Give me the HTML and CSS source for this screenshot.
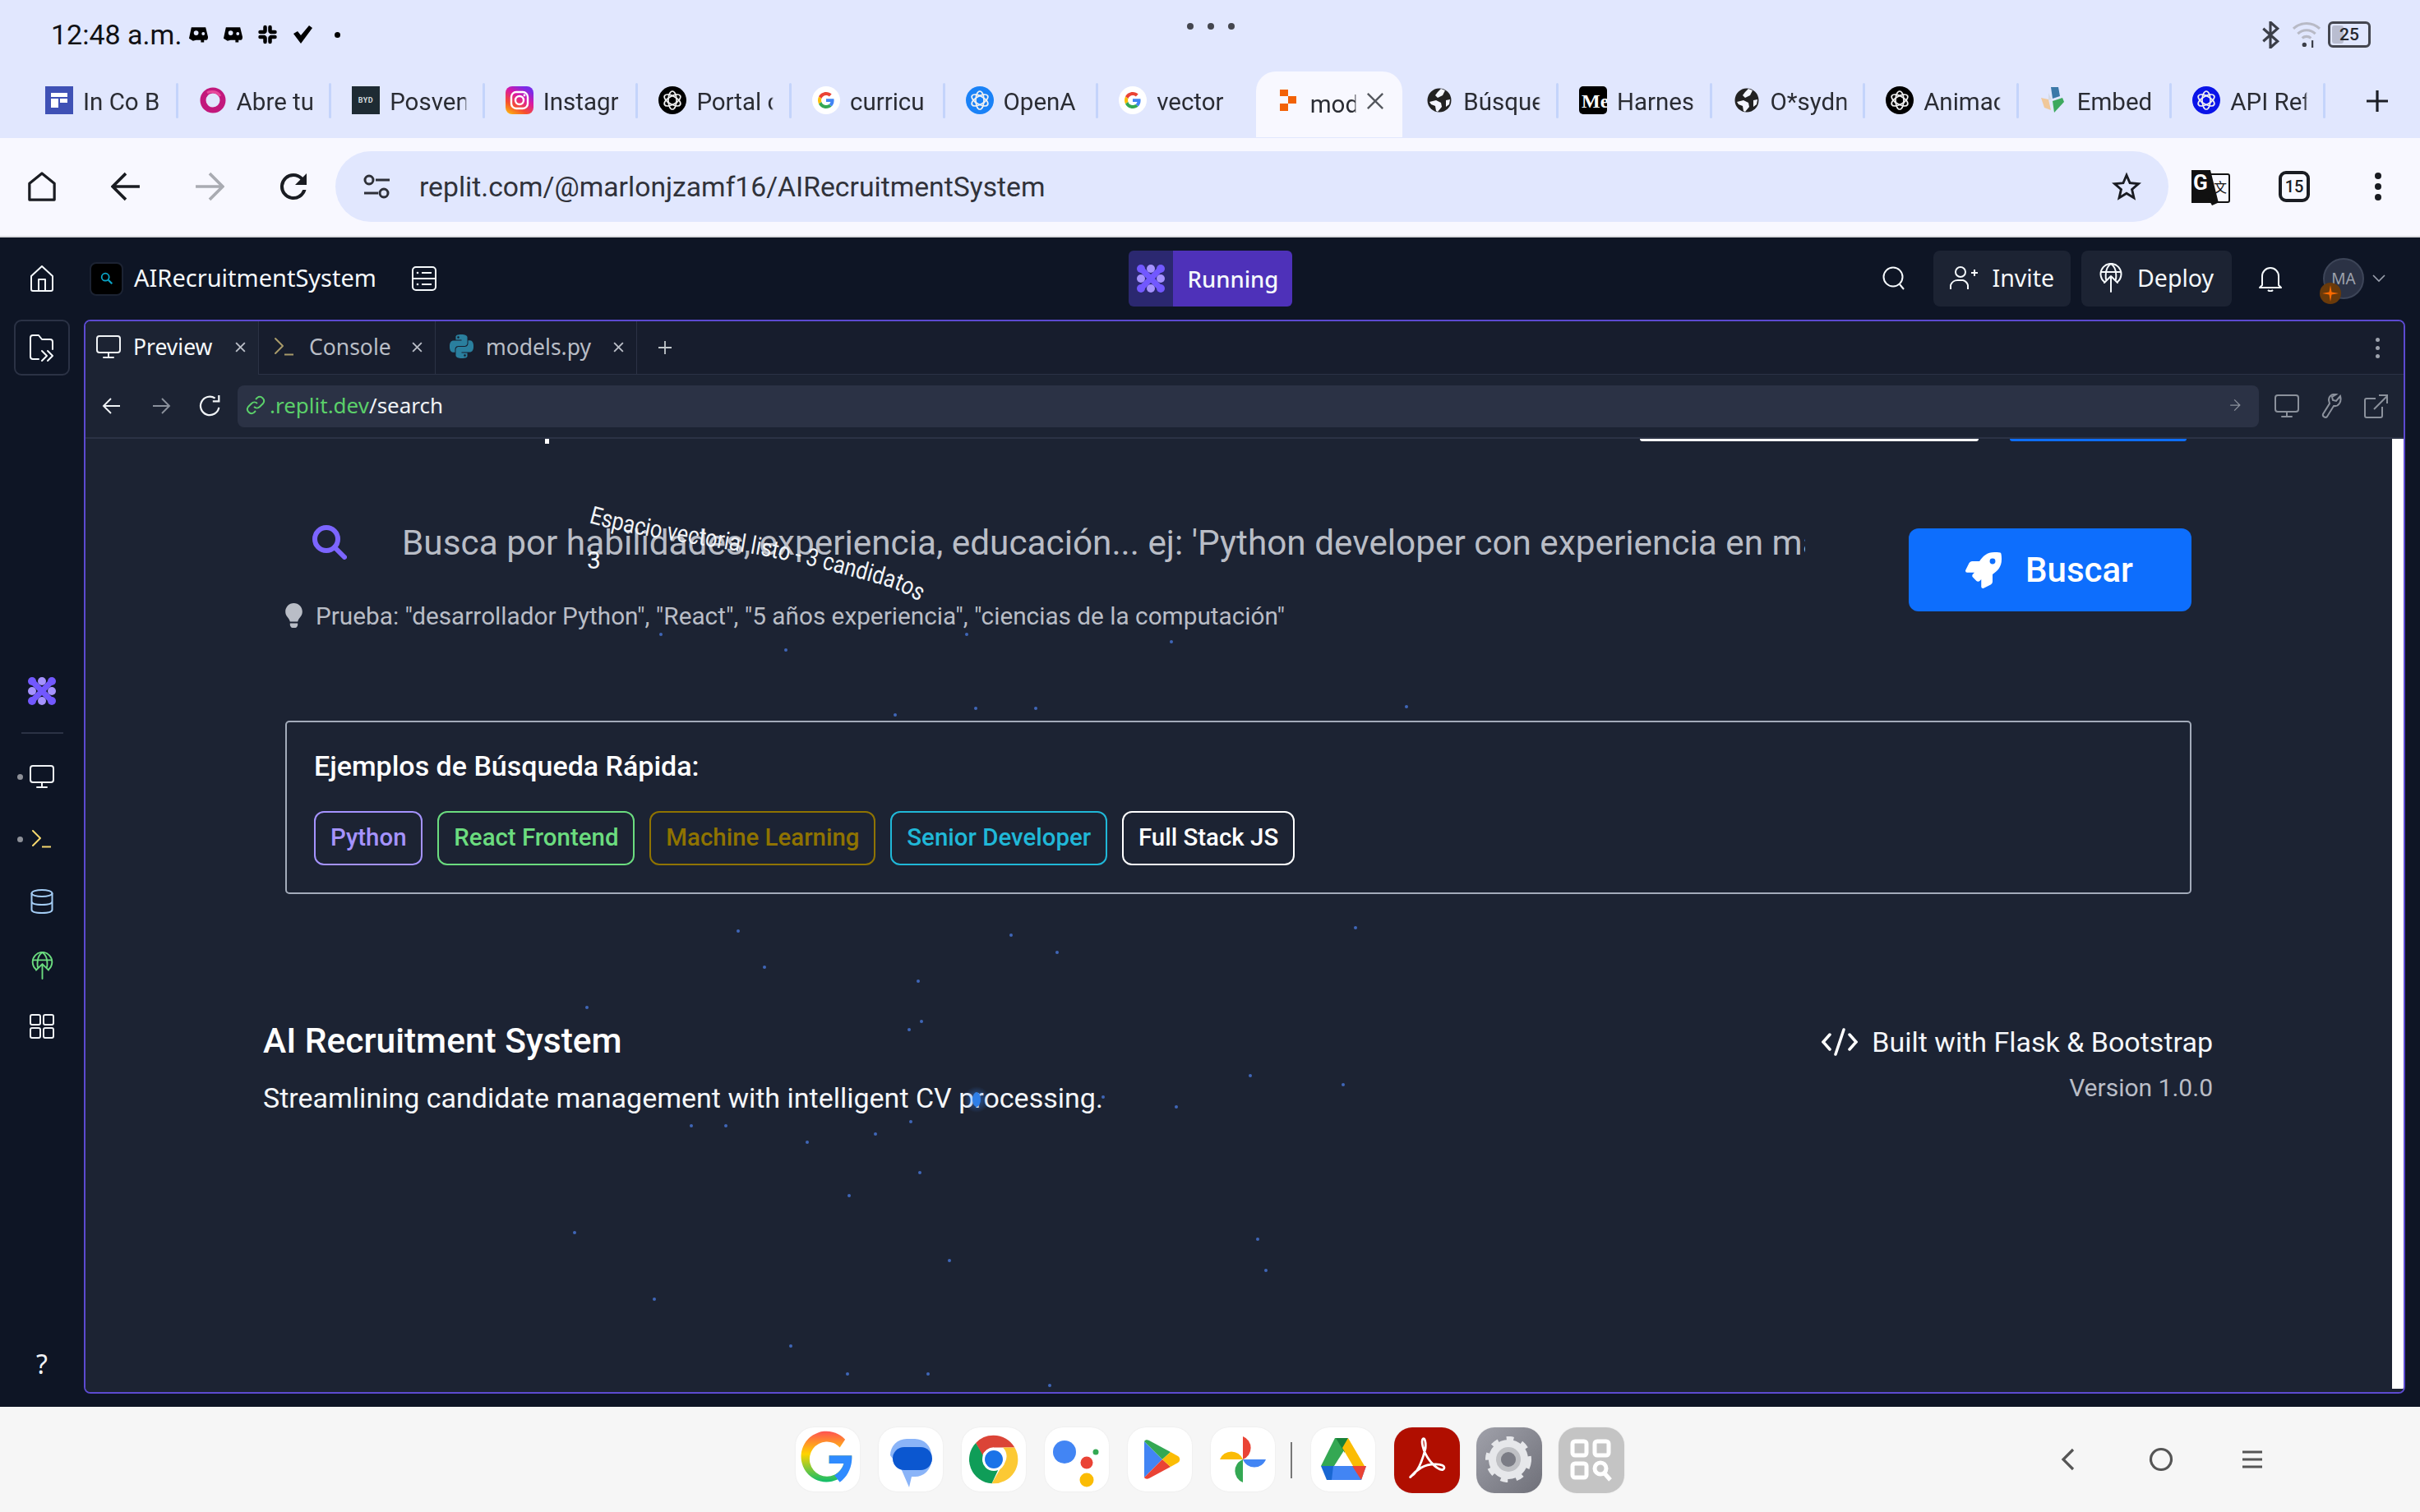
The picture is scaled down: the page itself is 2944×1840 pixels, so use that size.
FILE: index.html
```html
<!DOCTYPE html>
<html lang="es">
<head>
<meta charset="utf-8">
<title>AIRecruitmentSystem</title>
<link rel="stylesheet" href="styles.css">
</head>
<body>
<svg class="defs" aria-hidden="true">
  <symbol id="knot" viewBox="0 0 34 34">
    <circle cx="17" cy="17" r="17" fill="currentColor"/>
    <g fill="none" stroke="#f2f2f2" stroke-width="1.7">
      <ellipse cx="17" cy="17" rx="5" ry="11"/>
      <ellipse cx="17" cy="17" rx="5" ry="11" transform="rotate(60 17 17)"/>
      <ellipse cx="17" cy="17" rx="5" ry="11" transform="rotate(120 17 17)"/>
    </g>
  </symbol>
  <symbol id="gg" viewBox="0 0 48 48">
    <path fill="#EA4335" d="M24 9.5c3.54 0 6.71 1.22 9.21 3.6l6.85-6.85C35.9 2.38 30.47 0 24 0 14.62 0 6.51 5.38 2.56 13.22l7.98 6.19C12.43 13.72 17.74 9.5 24 9.5z"/>
    <path fill="#4285F4" d="M46.98 24.55c0-1.57-.15-3.09-.38-4.55H24v9.02h12.94c-.58 2.96-2.26 5.48-4.78 7.18l7.73 6c4.51-4.18 7.09-10.36 7.09-17.65z"/>
    <path fill="#FBBC05" d="M10.53 28.59c-.48-1.45-.76-2.99-.76-4.59s.27-3.14.76-4.59l-7.98-6.19C.92 16.46 0 20.12 0 24c0 3.88.92 7.54 2.56 10.78l7.97-6.19z"/>
    <path fill="#34A853" d="M24 48c6.48 0 11.93-2.13 15.89-5.81l-7.73-6c-2.15 1.45-4.92 2.3-8.16 2.3-6.26 0-11.57-4.22-13.47-9.91l-7.98 6.19C6.51 42.62 14.62 48 24 48z"/>
  </symbol>
  <symbol id="gfav" viewBox="0 0 34 34">
    <circle cx="17" cy="17" r="17" fill="#fff"/>
    <use href="#gg" x="7" y="7" width="20" height="20"/>
  </symbol>
  <symbol id="globe" viewBox="0 0 34 34">
    <circle cx="17" cy="17" r="14.5" fill="#222"/>
    <path fill="#f4f6ff" d="M19 3l5 2-3 6-6 3-3-3 3-4zM5 19l8-2 6 3 1 5-5 6-2-1-1-6-5-2zM25 17l5-1-1 6-4 3z"/>
  </symbol>
  <symbol id="agent" viewBox="0 0 34 34">
    <g stroke="#7258ff" stroke-width="7" stroke-linecap="round">
      <path d="M5 5l24 24M29 5L5 29"/>
    </g>
    <g fill="#7258ff">
      <circle cx="5" cy="5" r="5"/><circle cx="29" cy="5" r="5"/><circle cx="5" cy="29" r="5"/><circle cx="29" cy="29" r="5"/>
    </g>
    <g fill="#a592ff">
      <circle cx="17" cy="5" r="5"/><circle cx="17" cy="29" r="5"/><circle cx="5" cy="17" r="5"/><circle cx="29" cy="17" r="5"/>
    </g>
  </symbol>
  <symbol id="monitor" viewBox="0 0 30 28">
    <g fill="none" stroke="currentColor" stroke-width="2" stroke-linecap="round" stroke-linejoin="round">
      <rect x="1" y="1" width="28" height="20" rx="3"/><path d="M15 21v6M9 27h12"/>
    </g>
  </symbol>
  <symbol id="term" viewBox="0 0 26 24">
    <g fill="none" stroke="currentColor" stroke-width="2" stroke-linecap="round" stroke-linejoin="round">
      <path d="M2 2l9 9-9 9"/><path d="M13 21.500h11" stroke-linecap="butt"/>
    </g>
  </symbol>
  <symbol id="deploy" viewBox="0 0 28 36">
    <g fill="none" stroke="currentColor" stroke-width="2" stroke-linecap="round" stroke-linejoin="round">
      <path d="M6 23A12.500 12.500 0 1 1 22 23"/>
      <path d="M2 11h24M14 1C8 5 7 12 8 20M14 1c6 4 7 11 6 19M14 35V16M6 24l8-8 8 8"/>
    </g>
  </symbol>
  <symbol id="xmark" viewBox="0 0 14 14">
    <path d="M2 2l10 10M12 2L2 12" fill="none" stroke="currentColor" stroke-width="1.800"/>
  </symbol>
</svg>

<div class="status">
  <div class="status-left">
    <span class="clock">12:48 a.m.</span>
    <svg class="st-ico" viewBox="0 0 26 24"><path d="M4 3h18l3 12c0 3-1 4-3 4h-2v3h-4v-3h-6l-4 1-5-3z"/><circle cx="10" cy="10" r="3" fill="#e1e7fe"/><circle cx="19" cy="11" r="2" fill="#e1e7fe"/></svg>
    <svg class="st-ico" viewBox="0 0 26 24"><path d="M4 3h18l3 12c0 3-1 4-3 4h-2v3h-4v-3h-6l-4 1-5-3z"/><circle cx="10" cy="10" r="3" fill="#e1e7fe"/><circle cx="19" cy="11" r="2" fill="#e1e7fe"/></svg>
    <svg class="st-ico" viewBox="0 0 24 24"><g stroke="#000" stroke-width="4.500" stroke-linecap="round"><path d="M3 9h5M15 3v5M16 9h5M9 3v5M3 15h5M9 16v5M16 15h5M15 16v5"/></g></svg>
    <svg class="st-ico st-check" viewBox="0 0 26 24"><path d="M2 11l5-3 4 5L21 1l4 3-14 19z"/></svg>
    <i class="st-dot"></i>
  </div>
  <div class="handle"><i></i><i></i><i></i></div>
  <div class="status-right">
    <svg class="bt" viewBox="0 0 26 34"><path d="M4 9l18 16-9 8V1l9 8L4 25" fill="none" stroke="#3b3e48" stroke-width="3.200"/></svg>
    <svg class="wifi" viewBox="0 0 40 36"><g fill="none" stroke="#b8bac6" stroke-width="3.500"><path d="M2 10a26 26 0 0 1 36 0M8 17a17 17 0 0 1 24 0M14 23a9 9 0 0 1 12 0"/></g><circle cx="17" cy="32" r="3" fill="#3b3e48"/><path d="M28 26v10" stroke="#3b3e48" stroke-width="2.500"/></svg>
    <span class="batt"><span class="batt-fill"></span><span class="batt-num">25</span></span>
  </div>
</div>

<div class="tabstrip">
  <div class="tab"><svg class="fav" viewBox="0 0 34 34"><rect width="34" height="34" fill="#3f51b5"/><path fill="#fff" d="M7 8h20v5H7zM7 15h9v11H7zM18 15h9v5h-9z"/></svg><span class="tab-t">In Co B</span></div>
  <div class="tab"><svg class="fav" viewBox="0 0 34 34"><circle cx="17" cy="17" r="12" fill="none" stroke="#c2187c" stroke-width="7"/><path d="M10 8a12 12 0 0 1 16 4" stroke="#e8499b" stroke-width="3" fill="none"/></svg><span class="tab-t">Abre tu</span></div>
  <div class="tab"><svg class="fav" viewBox="0 0 34 34"><rect width="34" height="34" fill="#1e2b33"/><text class="byd" x="17" y="20">BYD</text></svg><span class="tab-t">Posven</span></div>
  <div class="tab"><svg class="fav" viewBox="0 0 34 34"><defs><linearGradient id="ig" x1="0" y1="1" x2=".6" y2="0"><stop offset="0" stop-color="#fdc70a"/><stop offset=".35" stop-color="#f6502e"/><stop offset=".7" stop-color="#d918a5"/><stop offset="1" stop-color="#7a2be8"/></linearGradient></defs><rect width="34" height="34" rx="8" fill="url(#ig)"/><rect x="7" y="7" width="20" height="20" rx="6" fill="none" stroke="#fff" stroke-width="2.400"/><circle cx="17" cy="17" r="5" fill="none" stroke="#fff" stroke-width="2.400"/><circle cx="23" cy="11" r="1.400" fill="#fff"/></svg><span class="tab-t">Instagr</span></div>
  <div class="tab"><svg class="fav c-black"><use href="#knot"/></svg><span class="tab-t">Portal c</span></div>
  <div class="tab"><svg class="fav"><use href="#gfav"/></svg><span class="tab-t">curricu</span></div>
  <div class="tab"><svg class="fav c-blue"><use href="#knot"/></svg><span class="tab-t">OpenA</span></div>
  <div class="tab"><svg class="fav"><use href="#gfav"/></svg><span class="tab-t">vector</span></div>
  <div class="tab tab-active"><svg class="fav" viewBox="0 0 34 34"><path fill="#f26207" d="M9 4h10v8h-10zM19 12h10v9h-10zM9 21h10v9h-10z"/></svg><span class="tab-t tab-t-short">mod</span><svg class="tab-x" viewBox="0 0 24 24"><path d="M2 2l20 20M22 2L2 22" fill="none" stroke="#55585f" stroke-width="2.600"/></svg></div>
  <div class="tab"><svg class="fav"><use href="#globe"/></svg><span class="tab-t">Búsque</span></div>
  <div class="tab"><svg class="fav" viewBox="0 0 34 34"><rect width="34" height="34" rx="5" fill="#000"/><text class="mc" x="3" y="26">Me</text></svg><span class="tab-t">Harnes</span></div>
  <div class="tab"><svg class="fav"><use href="#globe"/></svg><span class="tab-t">O*sydn</span></div>
  <div class="tab"><svg class="fav c-black"><use href="#knot"/></svg><span class="tab-t">Animac</span></div>
  <div class="tab"><svg class="fav" viewBox="0 0 34 34"><path fill="#3b78a8" d="M14 1h9l2 11-9 3z"/><path fill="#f0c89a" d="M2 14l9 2 3 13-8-3z"/><path fill="#3da95e" d="M16 18l12-4 2 5-12 13z"/><path fill="#d6dbe6" d="M11 8l4 8-4 1z"/></svg><span class="tab-t">Embed</span></div>
  <div class="tab"><svg class="fav c-indigo"><use href="#knot"/></svg><span class="tab-t">API Ref</span></div>
  <svg class="tab-plus" viewBox="0 0 28 28"><path d="M14 1v26M1 14h26" stroke="#1c1e26" stroke-width="3.200"/></svg>
</div>

<div class="toolbar">
  <div class="tb-btn"><svg class="tb-ico" viewBox="0 0 38 38"><path d="M3 15L19 2l16 13v21H3zM13 36" fill="none" stroke="#1a1c22" stroke-width="3.400" stroke-linejoin="round"/></svg></div>
  <div class="tb-btn"><svg class="tb-ico" viewBox="0 0 34 34"><path d="M33 17H3M17 2L2 17l15 15" fill="none" stroke="#1a1c22" stroke-width="3.400"/></svg></div>
  <div class="tb-btn"><svg class="tb-ico" viewBox="0 0 34 34"><path d="M1 17h30M17 2l15 15-15 15" fill="none" stroke="#a9abb2" stroke-width="3.400"/></svg></div>
  <div class="tb-btn"><svg class="tb-ico" viewBox="3 3 18 18"><path fill="#1a1c22" d="M17.650 6.350A7.960 7.960 0 0 0 12 4a8 8 0 1 0 7.730 10h-2.080A6 6 0 1 1 12 6c1.660 0 3.140.69 4.220 1.780L13 11h7V4l-2.350 2.350z"/></svg></div>
  <div class="omnibox">
    <svg class="tune" viewBox="0 0 32 30"><g fill="none" stroke="#2e3038" stroke-width="3"><circle cx="7" cy="7" r="5"/><path d="M15 7h17M1 23h17"/><circle cx="25" cy="23" r="5"/></g></svg>
    <span class="omni-url">replit.com/@marlonjzamf16/AIRecruitmentSystem</span>
    <svg class="star" viewBox="2 2 20 19.500"><path fill="#1a1c22" d="M22 9.240l-7.190-.62L12 2 9.190 8.630 2 9.240l5.460 4.730L5.820 21 12 17.270 18.180 21l-1.630-7.030L22 9.240zM12 15.400l-3.760 2.270 1-4.280-3.320-2.880 4.380-.38L12 6.100l1.710 4.040 4.380.38-3.320 2.880 1 4.280L12 15.400z"/></svg>
  </div>
  <div class="tb-btn"><svg class="translate" viewBox="0 0 47 46"><rect x="17" y="8" width="29" height="34" rx="2" fill="#f8f8ff" stroke="#111" stroke-width="2"/><path d="M0 3h23l10 40H0z" fill="#111"/><path d="M20 37l5 9 9-4z" fill="#111"/><text class="tr-g" x="2" y="27">G</text><text class="tr-z" x="27" y="30">文</text></svg></div>
  <div class="tb-btn"><span class="tabcount">15</span></div>
  <div class="tb-btn"><span class="kebab"><i></i><i></i><i></i></span></div>
</div>

<div class="ide">
  <header class="ide-head">
    <div class="head-left">
      <svg class="rail-home" viewBox="0 0 30 32"><path d="M2 13L15 1l13 12v16a2 2 0 0 1-2 2H4a2 2 0 0 1-2-2zM11 31V17h8v14" fill="none" stroke="#f5f9fc" stroke-width="2" stroke-linejoin="round"/></svg>
      <span class="repl-logo"><svg viewBox="0 0 20 20"><circle cx="8" cy="8" r="5" fill="none" stroke="#0aa5c7" stroke-width="2"/><path d="M12 12l5 5" stroke="#0aa5c7" stroke-width="2.500"/></svg></span>
      <span class="repl-name">AIRecruitmentSystem</span>
      <svg class="repl-db" viewBox="0 0 30 30"><g fill="none" stroke="#f5f9fc" stroke-width="2"><rect x="1" y="1" width="28" height="28" rx="4"/><path d="M1 15h28M12 8h12M12 22h12"/></g><circle cx="7" cy="8" r="1.300" fill="#f5f9fc"/><circle cx="7" cy="22" r="1.300" fill="#f5f9fc"/></svg>
    </div>
    <div class="running">
      <span class="run-ico"><svg class="agent-sm"><use href="#agent"/></svg></span>
      <span class="run-txt">Running</span>
    </div>
    <div class="head-right">
      <svg class="h-search" viewBox="0 0 28 30"><circle cx="13" cy="13" r="11.500" fill="none" stroke="#f5f9fc" stroke-width="2"/><path d="M21 22l5 6" stroke="#f5f9fc" stroke-width="2"/></svg>
      <div class="h-btn">
        <svg class="h-btn-ico" viewBox="0 0 34 30"><g fill="none" stroke="#f5f9fc" stroke-width="2"><circle cx="13" cy="8" r="6"/><path d="M1 29v-5a9 9 0 0 1 9-6h6a9 9 0 0 1 6 6v5M26 9h8M30 5v8"/></g></svg>
        <span>Invite</span>
      </div>
      <div class="h-btn h-btn-wide">
        <svg class="h-btn-ico h-dep"><use href="#deploy"/></svg>
        <span>Deploy</span>
      </div>
      <svg class="h-bell" viewBox="0 0 28 32"><path d="M4 24V13a10 10 0 0 1 20 0v11l3 3H1z" fill="none" stroke="#f5f9fc" stroke-width="2" stroke-linejoin="round"/><path d="M11 30a4 4 0 0 0 6 0" fill="none" stroke="#f5f9fc" stroke-width="2"/></svg>
      <div class="avatar">MA<span class="av-badge"><svg viewBox="0 0 20 20"><path fill="#ff6a00" d="M10 0l1.500 8.500L20 10l-8.500 1.500L10 20l-1.500-8.500L0 10l8.500-1.500z"/></svg></span></div>
      <svg class="h-chev" viewBox="0 0 16 10"><path d="M1 1l7 7 7-7" fill="none" stroke="#9aa0ad" stroke-width="1.600"/></svg>
    </div>
  </header>

  <div class="workspace">
    <nav class="rail">
      <div class="rail-files"><svg viewBox="0 0 32 36"><g fill="none" stroke="#f5f9fc" stroke-width="2" stroke-linecap="round" stroke-linejoin="round"><path d="M12 32H5a3 3 0 0 1-3-3V6a3 3 0 0 1 3-3h7l4 5h10a3 3 0 0 1 3 3v9"/><path d="M16 22l6 6-6 6M23 22l6 6-6 6"/></g></svg></div>
      <svg class="rail-agent"><use href="#agent"/></svg>
      <span class="rail-sep"></span>
      <div class="rail-item r-white"><i class="rail-dot"></i><svg class="ri-mon"><use href="#monitor"/></svg></div>
      <div class="rail-item r-yellow"><i class="rail-dot"></i><svg class="ri-term"><use href="#term"/></svg></div>
      <div class="rail-item r-blue"><svg class="ri-db" viewBox="0 0 28 30"><g fill="none" stroke="currentColor" stroke-width="2"><ellipse cx="14" cy="5" rx="12.500" ry="4"/><path d="M1.500 5v20c0 2.500 5 4 12.500 4s12.500-1.500 12.500-4V5M1.500 15c0 2.500 5 4 12.500 4s12.500-1.500 12.500-4"/></g></svg></div>
      <div class="rail-item r-green"><svg class="ri-dep"><use href="#deploy"/></svg></div>
      <div class="rail-item r-white"><svg class="ri-grid" viewBox="0 0 30 30"><g fill="none" stroke="currentColor" stroke-width="2"><rect x="1" y="1" width="12" height="12" rx="2"/><rect x="17" y="1" width="12" height="12" rx="2"/><rect x="1" y="17" width="12" height="12" rx="2"/><rect x="17" y="17" width="12" height="12" rx="2"/></g></svg></div>
      <span class="rail-help">?</span>
    </nav>

    <section class="pane">
      <div class="pane-tabs">
        <div class="ptab ptab-active"><svg class="pt-ico pt-mon"><use href="#monitor"/></svg><span class="pt-label pt-label-on">Preview</span><svg class="pt-x"><use href="#xmark"/></svg></div>
        <div class="ptab ptab-console"><svg class="pt-ico pt-term"><use href="#term"/></svg><span class="pt-label">Console</span><svg class="pt-x"><use href="#xmark"/></svg></div>
        <div class="ptab ptab-models"><svg class="pt-ico pt-py" viewBox="0 0 24 24"><path fill="#2a7f9e" d="M14.250.18l.9.2.73.26.59.3.45.32.34.34.25.34.16.33.1.3.04.26.02.2-.01.13V8.500l-.05.63-.13.55-.21.46-.26.38-.3.31-.33.25-.35.19-.35.14-.33.1-.3.07-.26.04-.21.02H8.770l-.69.05-.59.14-.5.22-.41.27-.33.32-.27.35-.2.36-.15.37-.1.35-.07.32-.04.27-.02.21v3.060H3.170l-.21-.03-.28-.07-.32-.12-.35-.18-.36-.26-.36-.36-.35-.46-.32-.59-.28-.73-.21-.88-.14-1.050-.05-1.230.06-1.220.16-1.040.24-.87.32-.71.36-.57.4-.44.42-.33.42-.24.4-.16.36-.1.32-.05.24-.01h.16l.06.01h8.160v-.83H6.180l-.01-2.750-.02-.37.05-.34.11-.31.17-.28.25-.26.31-.23.38-.2.44-.18.51-.15.58-.12.64-.1.71-.06.77-.04.84-.02 1.270.05zm-6.300 1.980l-.23.33-.08.41.08.41.23.34.33.22.41.09.41-.09.33-.22.23-.34.08-.41-.08-.41-.23-.33-.33-.22-.41-.09-.41.09zm13.090 3.950l.28.06.32.12.35.18.36.27.36.35.35.47.32.59.28.73.21.88.14 1.040.05 1.230-.06 1.230-.16 1.040-.24.86-.32.71-.36.57-.4.45-.42.33-.42.24-.4.16-.36.09-.32.05-.24.02-.16-.01h-8.220v.82h5.840l.01 2.760.02.36-.05.34-.11.31-.17.29-.25.25-.31.24-.38.2-.44.17-.51.15-.58.13-.64.09-.71.07-.77.04-.84.01-1.270-.04-1.070-.14-.9-.2-.73-.25-.59-.3-.45-.33-.34-.34-.25-.34-.16-.33-.1-.3-.04-.25-.02-.2.01-.13v-5.340l.05-.64.13-.54.21-.46.26-.38.3-.32.33-.24.35-.2.35-.14.33-.1.3-.06.26-.04.21-.02.13-.01h5.840l.69-.05.59-.14.5-.21.41-.28.33-.32.27-.35.2-.36.15-.36.1-.35.07-.32.04-.28.02-.21V6.070h2.090l.14.01zm-6.470 14.250l-.23.33-.08.41.08.41.23.33.33.23.41.08.41-.08.33-.23.23-.33.08-.41-.08-.41-.23-.33-.33-.23-.41-.08-.41.08z"/></svg><span class="pt-label">models.py</span><svg class="pt-x"><use href="#xmark"/></svg></div>
        <div class="ptab-rest">
          <svg class="pt-plus" viewBox="0 0 18 18"><path d="M9 1v16M1 9h16" stroke="#c2c8cc" stroke-width="1.800"/></svg>
          <span class="pt-kebab"><i></i><i></i><i></i></span>
        </div>
      </div>
      <div class="addr">
        <svg class="ad-ico ad-on" viewBox="0 0 24 24"><path d="M22 12H3M11 3l-9 9 9 9" fill="none" stroke="currentColor" stroke-width="1.900"/></svg>
        <svg class="ad-ico ad-off" viewBox="0 0 24 24"><path d="M2 12h19M13 3l9 9-9 9" fill="none" stroke="currentColor" stroke-width="1.900"/></svg>
        <svg class="ad-ico ad-on" viewBox="0 0 32 32"><path d="M27 18A12 12 0 1 1 22 6M27 2v8h-8" fill="none" stroke="currentColor" stroke-width="2.400"/></svg>
        <div class="ad-url">
          <svg class="ad-link" viewBox="0 0 24 24"><g fill="none" stroke="#5bd06a" stroke-width="2"><path d="M10 14a5 5 0 0 0 7 0l4-4a5 5 0 0 0-7-7l-2 2"/><path d="M14 10a5 5 0 0 0-7 0l-4 4a5 5 0 0 0 7 7l2-2"/></g></svg>
          <span class="ad-host">.replit.dev</span><span class="ad-path">/search</span>
          <svg class="ad-go" viewBox="0 0 16 24"><path d="M1 12h14M7 4l8 8-8 8" fill="none" stroke="#8b919c" stroke-width="1.500"/></svg>
        </div>
        <svg class="ad-tool ad-t-mon"><use href="#monitor"/></svg>
        <svg class="ad-tool ad-t-wr" viewBox="0 0 26 30"><path d="M23 3l-5 6-4-1-1-4 5-3c-5-1-9 2-9 7l1 4-8 13c-1 3 3 5 5 3l8-13c6 1 10-5 8-12z" fill="none" stroke="currentColor" stroke-width="2"/></svg>
        <svg class="ad-tool ad-t-ext" viewBox="0 0 30 30"><path d="M14 6H3a2 2 0 0 0-2 2v19a2 2 0 0 0 2 2h17a2 2 0 0 0 2-2V16M12 19L28 3M18 2h10v10" fill="none" stroke="currentColor" stroke-width="2"/></svg>
      </div>
      <div class="pane-rule"></div>

      <main class="page">
        <span class="cut cut-dot"></span>
        <span class="cut cut-white"></span>
        <span class="cut cut-blue"></span>
        <span class="scrollbar"></span>

        <div class="search">
          <div class="search-main">
            <div class="search-input">
              <svg class="s-ico" viewBox="0 0 42 42"><circle cx="17" cy="17" r="14" fill="none" stroke="#7c65ff" stroke-width="6"/><path d="M27 27l12 12" stroke="#7c65ff" stroke-width="6" stroke-linecap="round"/></svg>
              <span class="s-text">Busca por habilidades, experiencia, educación... ej: 'Python developer con experiencia en machine learning'</span>
            </div>
            <div class="hint">
              <svg class="bulb" viewBox="0 0 352 512"><path fill="#b9bdc6" d="M96.060 454.350c.01 6.290 1.870 12.450 5.360 17.690l17.090 25.690a31.990 31.990 0 0 0 26.640 14.280h61.710a31.990 31.990 0 0 0 26.640-14.280l17.090-25.690a31.989 31.989 0 0 0 5.360-17.690l.04-38.350H96.010l.05 38.350zM0 176c0 44.370 16.450 84.850 43.560 115.780 16.520 18.850 42.360 58.230 52.210 91.450.04.26.07.52.11.78h160.240c.04-.26.07-.51.11-.78 9.850-33.220 35.690-72.600 52.210-91.450C335.550 260.850 352 220.370 352 176 352 78.610 272.910-.3 175.450 0 73.440.31 0 82.97 0 176z"/></svg>
              <span>Prueba: "desarrollador Python", "React", "5 años experiencia", "ciencias de la computación"</span>
            </div>
          </div>
          <button class="go">
            <svg class="rocket" viewBox="0 0 512 512"><path fill="#fff" d="M505.120 19.094c-1.189-5.531-6.658-11-12.207-12.188C460.716 0 435.507 0 410.407 0 307.175 0 245.269 55.203 199.052 128H94.838c-16.348.016-35.557 11.875-42.887 26.484L2.516 253.297A28.400 28.400 0 0 0 0 264a24.009 24.009 0 0 0 24.006 24h103.810l-22.475 22.469c-11.365 11.361-12.996 32.258 0 45.250l50.904 50.906c11.156 11.188 32.156 13.156 45.277 0l22.475-22.469V488a24.009 24.009 0 0 0 24.006 24 28.559 28.559 0 0 0 10.707-2.516l98.728-49.391c14.629-7.297 26.508-26.500 26.508-42.859V312.797c72.598-46.313 128.035-108.406 128.035-211.094.001-25.203.001-50.406-6.954-82.609zM384.040 168a40 40 0 1 1 40.010-40 40.023 40.023 0 0 1-40.010 40z"/></svg>
            <span>Buscar</span>
          </button>
        </div>

        <div class="examples">
          <h3 class="ex-title">Ejemplos de Búsqueda Rápida:</h3>
          <div class="chips">
            <span class="chip chip-purple">Python</span>
            <span class="chip chip-green">React Frontend</span>
            <span class="chip chip-gold">Machine Learning</span>
            <span class="chip chip-cyan">Senior Developer</span>
            <span class="chip chip-white">Full Stack JS</span>
          </div>
        </div>

        <footer class="foot">
          <div class="foot-l">
            <h2 class="foot-title">AI Recruitment System</h2>
            <p class="foot-desc">Streamlining candidate management with intelligent CV processing.</p>
          </div>
          <div class="foot-r">
            <p class="foot-built"><svg class="code" viewBox="0 0 44 34"><path d="M10 8l-8 9 8 9M34 8l8 9-8 9M27 2l-10 30" fill="none" stroke="#fff" stroke-width="3.500" stroke-linecap="round"/></svg><span>Built with Flask &amp; Bootstrap</span></p>
            <p class="foot-ver">Version 1.0.0</p>
          </div>
        </footer>

        <svg class="overlay" viewBox="104 534 2806 1160">
          <defs>
            <path id="curve" d="M716 636 C 800 660, 900 666, 1000 692 S 1090 716, 1125 736"/>
            <radialGradient id="glow"><stop offset="0" stop-color="#3b8bff" stop-opacity=".55"/><stop offset="1" stop-color="#3b8bff" stop-opacity="0"/></radialGradient>
          </defs>
          <text class="float-txt"><textPath href="#curve" textLength="415" lengthAdjust="spacingAndGlyphs">Espacio vectorial listo - 3 candidatos</textPath></text>
          <text class="float-txt" x="714" y="692">3</text>
          <g fill="#3f66b8">
            <circle cx="804" cy="772" r="2"/><circle cx="956" cy="791" r="2"/><circle cx="1089" cy="870" r="2"/><circle cx="1187" cy="862" r="2"/><circle cx="1260" cy="862" r="2"/><circle cx="1711" cy="860" r="2"/><circle cx="1176" cy="772" r="2"/><circle cx="1425" cy="781" r="2"/>
            <circle cx="898" cy="1133" r="2"/><circle cx="1230" cy="1138" r="2"/><circle cx="1649" cy="1129" r="2"/><circle cx="930" cy="1177" r="2"/><circle cx="1286" cy="1159" r="2"/><circle cx="1117" cy="1194" r="2"/><circle cx="714" cy="1226" r="2"/><circle cx="1121" cy="1243" r="2"/><circle cx="1521" cy="1309" r="2"/><circle cx="1634" cy="1320" r="2"/>
            <circle cx="982" cy="1390" r="2"/><circle cx="1065" cy="1380" r="2"/><circle cx="1108" cy="1365" r="2"/><circle cx="841" cy="1370" r="2"/><circle cx="883" cy="1370" r="2"/><circle cx="1431" cy="1347" r="2"/><circle cx="1033" cy="1455" r="2"/><circle cx="699" cy="1500" r="2"/><circle cx="1119" cy="1427" r="2"/><circle cx="1530" cy="1508" r="2"/><circle cx="1540" cy="1546" r="2"/><circle cx="1155" cy="1534" r="2"/><circle cx="796" cy="1581" r="2"/><circle cx="962" cy="1638" r="2"/><circle cx="1129" cy="1672" r="2"/><circle cx="1031" cy="1672" r="2"/><circle cx="1277" cy="1686" r="2"/><circle cx="1342" cy="1335" r="2"/><circle cx="1106" cy="1253" r="2"/>
          </g>
          <circle cx="1188" cy="1338" r="16" fill="url(#glow)"/>
          <ellipse cx="1188" cy="1338" rx="5" ry="9" fill="#2f7fe8"/>
        </svg>
      </main>
    </section>
  </div>
</div>

<div class="dock">
  <div class="dock-apps">
    <span class="app"><svg viewBox="0 0 48 48"><defs><linearGradient id="rb" x1="0" y1="0" x2="0" y2="1"><stop offset="0" stop-color="#ff5252"/><stop offset=".45" stop-color="#ffd400"/><stop offset="1" stop-color="#0ebd6b"/></linearGradient></defs><path d="M33 15a13 13 0 1 0 3 12H25v-6h17a19 19 0 1 1-5-12z" fill="url(#rb)"/><path d="M25 21h17c.6 8-3 16-9 20l-4-5c3-2 6-5 7-9H25z" fill="#2f8bff"/></svg></span>
    <span class="app"><svg viewBox="0 0 78 78"><path fill="#8ab4f8" d="M14 34a20 20 0 0 1 20-20h10a20 20 0 0 1 20 20v6a20 20 0 0 1-20 20h-4l-3 13-13-30a22 22 0 0 1-10-9z"/><rect x="17" y="24" width="48" height="28" rx="14" fill="#0b57d0"/></svg></span>
    <span class="app"><svg viewBox="0 0 48 48"><g transform="translate(6 6) scale(.75)"><path fill="#db4437" d="M24 0a24 24 0 0 1 20.800 12H24a12 12 0 0 0-11.500 8.500L6 7.500A24 24 0 0 1 24 0z"/><path fill="#0f9d58" d="M6 7.500l10.500 18.300A9 9 0 0 0 29 33l-7 15A24 24 0 0 1 6 7.500z"/><path fill="#fcc934" d="M44.800 12A24 24 0 0 1 22 48l10.400-18A12 12 0 0 0 33 12z"/><circle cx="24" cy="24" r="11.500" fill="#fff"/><circle cx="24" cy="24" r="9" fill="#1a73e8"/></g></svg></span>
    <span class="app"><svg viewBox="0 0 78 78"><circle cx="24" cy="30" r="14" fill="#4285f4"/><circle cx="51" cy="43" r="7.500" fill="#ea4335"/><circle cx="51" cy="64" r="8.500" fill="#fbbc04"/><circle cx="62" cy="30" r="3.500" fill="#34a853"/></svg></span>
    <span class="app"><svg viewBox="0 0 78 78"><path fill="#4285f4" d="M20 17v44l22-22z"/><path fill="#34a853" d="M20 17c1-2 4-2 6-1l26 14-10 9z"/><path fill="#ea4335" d="M20 61c1 2 4 2 6 1l26-14-10-9z"/><path fill="#fbbc04" d="M52 30l9 5c3 2 3 6 0 8l-9 5-10-9z"/></svg></span>
    <span class="app"><svg viewBox="0 0 78 78"><path fill="#ea4335" d="M39 11a15 15 0 0 1 0 28z"/><path fill="#4285f4" d="M67 39a15 15 0 0 1-28 0z"/><path fill="#34a853" d="M39 67a15 15 0 0 1 0-28z"/><path fill="#fbbc04" d="M11 39a15 15 0 0 1 28 0z"/></svg></span>
    <i class="dock-sep"></i>
    <span class="app"><svg viewBox="0 0 78 78"><path fill="#34a853" d="M12 47L29 13h7l6 12-14 22z"/><path fill="#188038" d="M30 13h15l-4 18z"/><path fill="#fbbc04" d="M45 13l20 34H51L38 25z"/><path fill="#4285f4" d="M24 47h43l-6 17H25z"/><path fill="#1967d2" d="M12 47h15l-2 17h-6z"/><path fill="#ea4335" d="M50 47h17l-6 17z"/></svg></span>
    <span class="app app-red"><svg viewBox="0 0 78 78"><path d="M20 60c8-4 14-18 18-34 1-8-1-14-3-12s-1 14 8 26 18 14 18 9-18-6-28 0-15 14-13 11z" fill="none" stroke="#fff" stroke-width="2.800"/></svg></span>
    <span class="app app-gear"><svg viewBox="0 0 78 78"><circle cx="39" cy="39" r="19" fill="none" stroke="#e6e7ea" stroke-width="10"/><circle class="gear-teeth" cx="39" cy="39" r="20" transform="rotate(5 39 39)"/><circle cx="39" cy="39" r="15" fill="#bfc0c4"/><circle cx="39" cy="39" r="9" fill="#7b7c85"/></svg></span>
    <span class="app app-folder"><svg viewBox="0 0 78 78"><g fill="none" stroke="#fff" stroke-width="5"><rect x="17" y="17" width="17" height="17" rx="3"/><rect x="44" y="17" width="17" height="17" rx="3"/><rect x="17" y="44" width="17" height="17" rx="3"/><circle cx="51" cy="50" r="7"/><path d="M56 56l7 8"/></g></svg></span>
  </div>
  <div class="dock-nav">
    <svg class="nav-ico" viewBox="0 0 24 30"><path d="M19 3L7 15l12 12" fill="none" stroke="#555" stroke-width="3.200"/></svg>
    <svg class="nav-ico" viewBox="0 0 30 30"><circle cx="15" cy="15" r="12.500" fill="none" stroke="#555" stroke-width="3.200"/></svg>
    <svg class="nav-ico" viewBox="0 0 30 30"><path d="M3 6h24M3 15h24M3 24h24" stroke="#555" stroke-width="3.200"/></svg>
  </div>
</div>
</body>
</html>
```
FILE: styles.css
```css
* { box-sizing: border-box; }
html, body { margin: 0; padding: 0; }
body {
  width: 2944px; height: 1840px; overflow: hidden;
  display: flex; flex-direction: column;
  font-family: Roboto, "Liberation Sans", sans-serif;
  background: #0e1525;
}
i { display: block; font-style: normal; }
svg { display: block; flex: none; }
.defs { position: absolute; width: 0; height: 0; }

/* status bar */
.status {
  height: 88px; background: #e1e7fe; flex: none;
  display: grid; grid-template-columns: 1fr auto 1fr; align-items: start;
  padding: 0 60px 0 62px;
}
.status-left { display: flex; align-items: center; height: 84px; }
.clock { font-size: 34px; color: #101114; margin-right: 8px; white-space: nowrap; }
.st-ico { width: 25px; height: 24px; margin-right: 17px; fill: #000; }
.st-check { width: 26px; margin-right: 0; }
.st-dot { width: 7px; height: 7px; border-radius: 50%; background: #000; margin-left: 26px; }
.handle { display: flex; gap: 17px; padding-top: 28px; }
.handle i { width: 8px; height: 8px; border-radius: 50%; background: #44464f; }
.status-right { display: flex; justify-content: flex-end; align-items: center; height: 84px; gap: 6px; }
.bt { width: 26px; height: 33px; margin-right: 5px; }
.wifi { width: 40px; height: 32px; }
.batt {
  width: 52px; height: 32px; border: 3px solid #44464f; border-radius: 6px;
  position: relative; display: flex; align-items: center; justify-content: center;
}
.batt-fill { position: absolute; left: 2px; top: 2px; bottom: 2px; width: 14px; background: #b9bdd0; border-radius: 3px; }
.batt-num { position: relative; font-size: 21px; font-weight: 500; color: #26282e; }

/* tab strip */
.tabstrip { height: 80px; flex: none; background: #e1e7fe; display: flex; align-items: flex-start; padding-left: 30px; position: relative; }
.tab { width: 186.6px; height: 68px; display: flex; align-items: center; position: relative; padding: 0 0 0 25px; flex: none; }
.tab::after { content: ""; position: absolute; right: 0; top: 13px; width: 3px; height: 43px; background: #c4d4fb; border-radius: 2px; }
.tab:nth-child(8)::after, .tab-active::after { display: none; }
.tab-active {
  background: #f8f8ff; height: 80px; border-radius: 24px 24px 0 0; margin-top: -1px;
  align-items: flex-start; padding-top: 18px; width: 178px; margin-left: 5px; margin-right: 3.6px; padding-left: 20px;
}
.fav { width: 34px; height: 34px; margin-right: 12px; }
.c-black { color: #000; } .c-blue { color: #1a82f7; } .c-indigo { color: #0a14e8; }
.tab-t {
  font-size: 29.5px; line-height: 38px; color: #2a2c33; width: 94px; overflow: hidden; white-space: nowrap; padding-top: 3px;
  -webkit-mask-image: linear-gradient(90deg, #000 97%, transparent); mask-image: linear-gradient(90deg, #000 97%, transparent);
}
.tab-t-short { width: 56px; }
.tab-x { width: 22px; height: 22px; margin-left: 12px; margin-top: 7px; }
.tab-plus { width: 28px; height: 28px; position: absolute; left: 2878px; top: 21px; }
.byd { font: 700 9px Roboto, sans-serif; fill: #d5dade; text-anchor: middle; letter-spacing: .5px; }
.mc { font: 700 24px "Liberation Serif", serif; fill: #fff; }

/* toolbar */
.toolbar { height: 121px; flex: none; background: #f8f8ff; display: flex; align-items: flex-start; padding-top: 16px; border-bottom: 2px solid #dcdce0; }
.tb-btn { width: 102px; height: 86px; flex: none; display: flex; align-items: center; justify-content: center; }
.tb-ico { width: 36px; height: 36px; }
.omnibox { flex: 1; height: 86px; background: #e1e7fe; border-radius: 43px; display: flex; align-items: center; padding: 0 33px 0 34px; }
.tune { width: 32px; height: 30px; margin-right: 36px; }
.omni-url { flex: 1; font-size: 33.7px; line-height: 40px; padding-top: 2px; color: #30323a; white-space: nowrap; }
.star { width: 36px; height: 36px; }
.translate { width: 47px; height: 46px; }
.tr-g { font: 700 26px Roboto, sans-serif; fill: #fff; }
.tr-z { font: 400 16px "Noto Sans CJK SC", sans-serif; fill: #111; }
.tabcount { width: 38px; height: 38px; border: 4px solid #1a1c22; border-radius: 9px; font-size: 20px; font-weight: 500; color: #1a1c22; display: flex; align-items: center; justify-content: center; }
.kebab { display: flex; flex-direction: column; gap: 5px; }
.kebab i { width: 8px; height: 8px; border-radius: 50%; background: #1a1c22; }

/* replit shell */
.ide { flex: 1; min-height: 0; display: flex; flex-direction: column; color: #f5f9fc; font-family: "Noto Sans", Roboto, sans-serif; background: #0e1525; }
.ide-head { height: 100px; flex: none; display: grid; grid-template-columns: 1fr auto 1fr; align-items: center; }
.head-left { display: flex; align-items: center; padding-left: 36px; }
.rail-home { width: 30px; height: 32px; margin-right: 43px; }
.repl-logo { width: 41px; height: 41px; background: #000; border-radius: 8px; border: 2px solid #1c2333; display: flex; align-items: center; justify-content: center; margin-right: 13px; }
.repl-logo svg { width: 18px; height: 18px; }
.repl-name { font-size: 29px; margin-right: 43px; white-space: nowrap; padding-bottom: 3px; }
.repl-db { width: 30px; height: 30px; }
.running { display: flex; height: 68px; border-radius: 6px; overflow: hidden; }
.run-ico { width: 54px; background: #2b2870; display: flex; align-items: center; justify-content: center; }
.agent-sm { width: 34px; height: 34px; }
.run-txt { width: 145px; background: #4e31b9; display: flex; align-items: center; justify-content: center; font-size: 27.5px; font-weight: 500; padding-left: 2px; }
.head-right { display: flex; align-items: center; justify-content: flex-end; padding-right: 42px; }
.h-search { width: 28px; height: 30px; margin-right: 34px; }
.h-btn { height: 68px; padding: 0 20px 3px; background: #1c2333; border-radius: 8px; display: flex; align-items: center; gap: 18px; font-size: 28.5px; margin-right: 13px; white-space: nowrap; }
.h-btn-wide { padding-left: 22px; padding-right: 22px; }
.h-btn-ico { width: 34px; height: 30px; }
.h-dep { width: 28px; height: 36px; color: #f5f9fc; }
.h-bell { width: 28px; height: 32px; margin-left: 20px; margin-right: 50px; }
.avatar { width: 50px; height: 50px; border-radius: 50%; background: #2b3245; border: 2px solid #3d4558; color: #9da2ad; font-size: 19px; display: flex; align-items: center; justify-content: center; position: relative; }
.av-badge { position: absolute; left: -6px; bottom: -8px; width: 26px; height: 26px; border-radius: 50%; background: #6a3a0a; display: flex; align-items: center; justify-content: center; }
.av-badge svg { width: 20px; height: 20px; }
.h-chev { width: 16px; height: 10px; margin-left: 10px; }

.workspace { flex: 1; min-height: 0; display: flex; }
.rail { width: 102px; flex: none; display: flex; flex-direction: column; align-items: center; padding-bottom: 36px; }
.rail-files { width: 68px; height: 68px; border: 2px solid #2b3245; border-radius: 9px; display: flex; align-items: center; justify-content: center; }
.rail-files svg { width: 32px; height: 36px; }
.rail-agent { width: 34px; height: 34px; margin-top: 367px; }
.rail-sep { width: 51px; height: 2px; background: #2b3245; margin-top: 33px; margin-bottom: 14px; }
.rail-item { height: 76px; width: 102px; display: flex; align-items: center; justify-content: center; position: relative; flex: none; }
.rail-dot { position: absolute; left: 21px; top: 35px; width: 7px; height: 7px; border-radius: 50%; background: #8d9098; }
.r-white { color: #f0f3f6; } .r-yellow { color: #f5d76e; } .r-blue { color: #a4cdf5; } .r-green { color: #6bdc7f; }
.ri-mon { width: 30px; height: 28px; }
.ri-term { width: 26px; height: 24px; }
.ri-db { width: 28px; height: 30px; }
.ri-dep { width: 27px; height: 34px; margin-top: 3px; }
.ri-grid { width: 30px; height: 30px; }
.rail-help { margin-top: auto; font-size: 32px; color: #f0f3f6; line-height: 1; }

.pane { width: 2824px; height: 1307px; flex: none; border: 2.5px solid #5c4ad0; border-radius: 8px; background: #1c2333; display: flex; flex-direction: column; overflow: hidden; }
.pane-tabs { height: 65px; flex: none; display: flex; background: #171d2d; }
.ptab { display: flex; align-items: center; height: 65px; border-right: 1.5px solid #2b3245; border-bottom: 1.5px solid #2b3245; font-size: 26.5px; position: relative; padding-left: 13px; padding-bottom: 3px; flex: none; }
.ptab-active { width: 211px; background: #1c2333; border-bottom: 0; }
.ptab-console { width: 215px; padding-left: 18px; }
.ptab-models { width: 245px; padding-left: 17px; }
.ptab-rest { flex: 1; border-bottom: 1.5px solid #2b3245; display: flex; align-items: center; justify-content: space-between; padding: 0 29px 0 25px; }
.pt-ico { margin-right: 15px; }
.pt-mon { width: 30px; height: 28px; color: #f0f3f6; }
.pt-term { width: 26px; height: 24px; color: #a89a6a; margin-right: 17px; }
.pt-py { width: 29px; height: 29px; margin-right: 15px; }
.pt-label { color: #b9bdc6; white-space: nowrap; }
.pt-label-on { color: #f5f9fc; }
.pt-x { position: absolute; right: 14px; top: 24px; width: 15px; height: 15px; color: #b9bdc6; }
.pt-plus { width: 18px; height: 18px; }
.pt-kebab { display: flex; flex-direction: column; gap: 5px; }
.pt-kebab i { width: 5px; height: 5px; border-radius: 50%; background: #9da2ad; }

.addr { height: 76px; flex: none; display: flex; align-items: center; padding-left: 20px; background: #1c2333; }
.ad-ico { width: 24px; height: 24px; margin-right: 36px; }
.ad-ico:nth-child(3) { width: 30px; height: 30px; margin-right: 18px; margin-left: -3px; }
.ad-on { color: #f0f3f6; } .ad-off { color: #8b919c; }
.ad-url { width: 2459px; height: 51px; background: #2b3245; border-radius: 8px; display: flex; align-items: center; padding: 0 22px 2px 10px; font-size: 26px; }
.ad-link { width: 24px; height: 24px; margin-right: 5px; }
.ad-host { color: #5bd06a; }
.ad-path { color: #f0f3f6; }
.ad-go { width: 14px; height: 20px; margin-left: auto; }
.ad-tool { width: 30px; height: 30px; color: #8b919c; }
.ad-t-mon { margin-left: 19px; height: 28px; }
.ad-t-wr { margin-left: 25px; }
.ad-t-ext { margin-left: 24px; }
.pane-rule { height: 2px; flex: none; background: #2b3245; }

.page { flex: 1; min-height: 0; position: relative; overflow: hidden; background: #1c2333; color: #fff; font-family: Roboto, sans-serif; padding-top: 99px; }
.cut { position: absolute; top: 0; height: 2.5px; }
.cut-dot { left: 559px; width: 5px; height: 6px; background: #fff; }
.cut-white { left: 1891px; width: 412px; background: #fff; border-radius: 0 0 4px 4px; }
.cut-blue { left: 2341px; width: 215px; background: #0d6efd; border-radius: 0 0 4px 4px; }
.scrollbar { position: absolute; right: 0; top: 0; bottom: 4px; width: 14px; background: #fff; }

.search { display: flex; justify-content: space-between; align-items: flex-start; margin-left: 243px; width: 2319px; }
.search-main { min-width: 0; }
.search-input { display: flex; align-items: center; height: 54px; padding-left: 33px; }
.s-ico { width: 42px; height: 42px; margin-right: 67px; }
.s-text { display: block; width: 1707px; overflow: hidden; white-space: nowrap; font-size: 42.3px; color: #b9bdc6; }
.hint { display: flex; align-items: center; height: 36px; margin-top: 44px; font-size: 29.75px; color: #b9bdc6; white-space: nowrap; }
.bulb { width: 21px; height: 30px; margin-right: 16px; }
.go { width: 344px; height: 101px; margin-top: 10px; flex: none; background: #0d6efd; border: 0; border-radius: 12px; color: #fff; font: 500 42px Roboto, sans-serif; display: flex; align-items: center; justify-content: center; gap: 29px; padding: 0 2px 0 0; }
.rocket { width: 44px; height: 44px; }

.examples { margin: 110px 0 0 243px; width: 2319px; height: 211px; border: 2px solid #a3abba; border-radius: 5px; padding: 33px 0 0 33px; }
.ex-title { margin: 0; font-size: 34px; font-weight: 500; line-height: 40px; color: #fff; }
.chips { display: flex; gap: 18px; margin-top: 35px; }
.chip { height: 66px; border: 2px solid; border-radius: 12px; padding: 0 17.9px 2px; display: flex; align-items: center; font-size: 29.45px; white-space: nowrap; font-weight: 500; }
.chip-purple { color: #a593ff; }
.chip-green { color: #6bdc7f; }
.chip-gold { color: #8f7300; }
.chip-cyan { color: #20b8d8; }
.chip-white { color: #fff; }

.foot { display: flex; justify-content: space-between; margin: 155px 0 0 216px; width: 2372px; }
.foot-title { margin: 0; font-size: 42.5px; font-weight: 500; line-height: 48px; }
.foot-desc { margin: 24px 0 0; font-size: 34px; line-height: 42px; color: #f5f7fa; white-space: nowrap; }
.foot-r { text-align: right; }
.foot-built { margin: 0; display: flex; align-items: center; justify-content: flex-end; gap: 17px; font-size: 34px; line-height: 50px; color: #f5f7fa; }
.code { width: 44px; height: 34px; }
.foot-ver { margin: 13px 0 0; font-size: 30px; line-height: 36px; color: #b9bdc6; }

.overlay { position: absolute; left: 0; top: 0; width: 2806px; height: 1160px; pointer-events: none; }
.float-txt { font: 400 30px Roboto, sans-serif; fill: #f2f4f7; }

/* dock */
.dock { height: 128px; flex: none; background: #f6f6f6; position: relative; display: flex; align-items: flex-start; padding: 25px 0 0 968px; }
.dock-apps { display: flex; gap: 23px; align-items: flex-start; }
.app { width: 78px; height: 78px; background: #fff; border-radius: 22px; display: block; flex: none; box-shadow: 0 0 2px rgba(0,0,0,.08); }
.app svg { width: 78px; height: 78px; }
.app-red { background: #b00e00; width: 80px; height: 80px; }
.app-gear { background: linear-gradient(135deg, #a0a1aa, #6f7079); width: 80px; height: 80px; margin-left: -3px; }
.app-folder { background: #c4c4c4; width: 80px; height: 80px; margin-left: -3px; }
.dock-sep { width: 2px; height: 44px; background: #777; margin: 18px 0 0 -4px; }
.gear-teeth { fill: none; stroke: #e6e7ea; stroke-width: 16; stroke-dasharray: 7 8; }
.dock-nav { position: absolute; left: 2503px; top: 49px; display: flex; gap: 87px; align-items: center; }
.nav-ico { width: 24px; height: 30px; }
.nav-ico:nth-child(2), .nav-ico:nth-child(3) { width: 30px; }
.nav-ico:nth-child(2) { margin-right: -6px; }
```
